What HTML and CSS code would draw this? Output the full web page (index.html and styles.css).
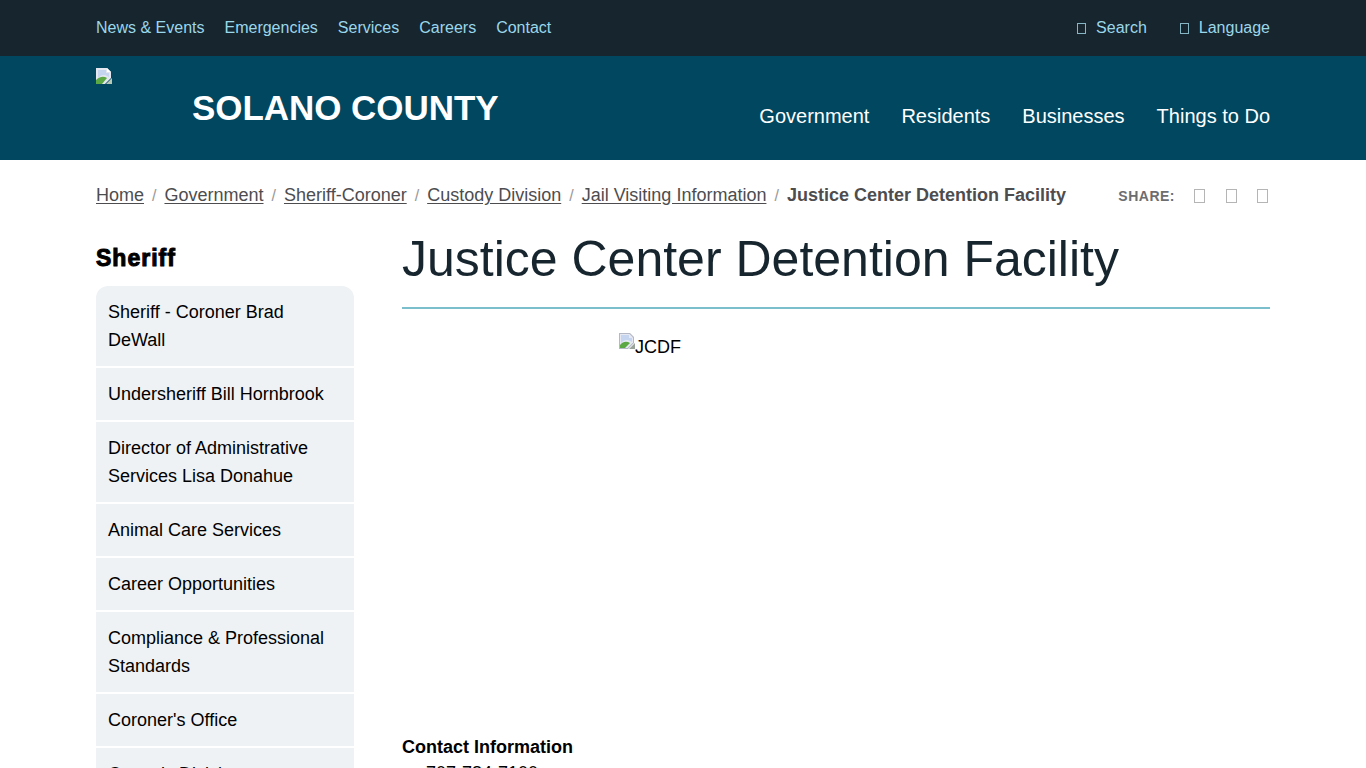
FILE: index.html
```html
<!DOCTYPE html>
<html lang="en">

<head>
  <meta charset="UTF-8">
  <meta name="viewport" content="width=device-width, initial-scale=1.0">
  <title>Justice Center Detention Facility</title>
  <link rel="stylesheet" href="styles.css">
</head>

<body>
  <div class="top-bar">
    <div class="wrap top-bar-inner">
      <nav class="top-links">
        <a href="#">News &amp; Events</a>
        <a href="#">Emergencies</a>
        <a href="#">Services</a>
        <a href="#">Careers</a>
        <a href="#">Contact</a>
      </nav>
      <div class="top-tools">
        <a href="#"><span class="tofu"></span>Search</a>
        <a href="#"><span class="tofu"></span>Language</a>
      </div>
    </div>
  </div>

  <header class="site-header">
    <div class="wrap site-header-inner">
      <div class="brand">
        <svg class="broken-img" width="16" height="16" viewBox="0 0 16 16">
          <path d="M0 0H11L15 4V10L9 16H0Z" fill="#e4e7f0" />
          <path d="M11 0L15 4H11Z" fill="#fff" />
          <path d="M2 2H10V5H13V9L11 8C8 6 5 7 2 10Z" fill="#c5d5f0" />
          <path d="M0 16V12C4 8 8 8 11 10L6 16Z" fill="#5ca845" />
          <path d="M16 10V16H10Z" fill="#b9c8b4" />
        </svg>
        <span class="brand-name">SOLANO COUNTY</span>
      </div>
      <nav class="main-nav">
        <a href="#">Government</a>
        <a href="#">Residents</a>
        <a href="#">Businesses</a>
        <a href="#">Things to Do</a>
      </nav>
    </div>
  </header>

  <div class="wrap crumb-row">
    <ol class="crumbs">
      <li><a href="#">Home</a></li>
      <li><a href="#">Government</a></li>
      <li><a href="#">Sheriff-Coroner</a></li>
      <li><a href="#">Custody Division</a></li>
      <li><a href="#">Jail Visiting Information</a></li>
      <li class="current"><span>Justice Center Detention Facility</span></li>
    </ol>
    <div class="share">
      <span class="share-label">SHARE:</span>
      <span class="tofu tofu-share"></span>
      <span class="tofu tofu-share"></span>
      <span class="tofu tofu-share"></span>
    </div>
  </div>

  <div class="wrap page-body">
    <aside class="side">
      <h2 class="side-title">Sheriff</h2>
      <ul class="side-nav">
        <li><a href="#">Sheriff - Coroner Brad DeWall</a></li>
        <li><a href="#">Undersheriff Bill Hornbrook</a></li>
        <li><a href="#">Director of Administrative Services Lisa Donahue</a></li>
        <li><a href="#">Animal Care Services</a></li>
        <li><a href="#">Career Opportunities</a></li>
        <li><a href="#">Compliance &amp; Professional Standards</a></li>
        <li><a href="#">Coroner's Office</a></li>
        <li><a href="#">Custody Division</a></li>
      </ul>
    </aside>

    <main class="content">
      <h1>Justice Center Detention Facility</h1>
      <div class="photo">
        <svg class="broken-img" width="16" height="16" viewBox="0 0 16 16">
          <path d="M0 0H11L15 4V10L9 16H0Z" fill="#b4b8c4" />
          <path d="M1 1H10.5L14 4.5V9.5L8.5 15H1Z" fill="#e6e9f2" />
          <path d="M2 2H10V5H13V9L11 8C8 6 5 7 2 10Z" fill="#c5d5f0" />
          <path d="M1 15V12C4 8 8 8 11 10L6 15Z" fill="#5ca845" />
          <path d="M16 10V16H10Z" fill="#9aa39a" />
        </svg><span class="photo-alt">JCDF</span>
      </div>
      <h3 class="contact-title">Contact Information</h3>
      <ul class="contact-list">
        <li>707-784-7100</li>
      </ul>
    </main>
  </div>
</body>

</html>
```

FILE: styles.css
```css
html,
body {
  height: 100%;
}

body {
  margin: 0;
  font-family: "Liberation Sans", Arial, sans-serif;
  font-size: 18px;
  line-height: 28px;
  color: #000;
  background-color: #fff;
  overflow-x: hidden;
}

a {
  color: inherit;
  text-decoration: none;
}

.wrap {
  width: 1174px;
  margin: 0 auto;
}

/* icon font did not load in the original, so the glyphs are empty boxes */
.tofu {
  display: inline-block;
  box-sizing: border-box;
  width: 9px;
  height: 11px;
  border: 1px solid #86b5c4;
}

/* top bar */
.top-bar {
  background-color: #17252e;
  color: #9ad7ea;
  font-size: 16px;
}

.top-bar-inner {
  display: flex;
  justify-content: space-between;
  align-items: center;
  height: 56px;
}

.top-links {
  display: flex;
  gap: 20px;
}

.top-tools {
  display: flex;
  gap: 33px;
}

.top-tools a {
  display: flex;
  align-items: center;
  gap: 10px;
}

/* header */
.site-header {
  background-color: #00475f;
  color: #fff;
}

.site-header-inner {
  display: flex;
  justify-content: space-between;
  height: 104px;
}

.brand {
  display: flex;
  align-items: flex-start;
  padding-top: 12px;
}

.broken-img {
  display: block;
  flex: none;
}

.brand-name {
  margin: 8px 0 0 80px;
  font-size: 35px;
  line-height: 64px;
  font-weight: 700;
  letter-spacing: -0.05px;
}

.main-nav {
  display: flex;
  gap: 32px;
  padding-top: 46px;
  font-size: 20px;
}

/* breadcrumb */
.crumb-row {
  display: flex;
  justify-content: space-between;
  align-items: center;
  height: 70px;
  color: #4d4d4f;
}

.crumbs {
  display: flex;
  margin: 0;
  padding: 0;
  list-style: none;
}

.crumbs a {
  text-decoration: underline;
  text-underline-offset: 2px;
}

.crumbs li + li::before {
  content: "/";
  padding: 0 8px;
  color: #999;
  font-size: 16px;
  font-weight: 400;
}

.crumbs .current span {
  font-weight: 700;
}

.share {
  display: flex;
  align-items: center;
  gap: 20.5px;
  margin: 2px 2px 0 0;
}

.share-label {
  margin-right: -1.5px;
  font-size: 14px;
  font-weight: 700;
  letter-spacing: 0.5px;
  color: #6d6d6f;
}

.tofu-share {
  width: 11px;
  height: 14px;
  border-color: #b5b5b5;
}

/* body columns */
.page-body {
  display: flex;
  gap: 48px;
}

.side {
  flex: none;
  width: 258px;
}

.side-title {
  margin: 14px 0 14px;
  font-size: 23px;
  line-height: 28px;
  font-weight: 700;
  -webkit-text-stroke: 1px #000;
  letter-spacing: 1px;
}

.side-nav {
  margin: 0;
  padding: 0;
  list-style: none;
  border-radius: 12px 12px 0 0;
  overflow: hidden;
}

.side-nav li {
  margin-bottom: 2px;
  background-color: #eff2f5;
}

.side-nav a {
  display: block;
  padding: 12px 12px;
}

.content {
  flex: 1;
  min-width: 0;
}

.content h1 {
  margin: 0;
  padding: 0 0 19px;
  border-bottom: 2px solid #7bbfcd;
  font-size: 50px;
  line-height: 58px;
  font-weight: 400;
  color: #17252e;
}

.photo {
  display: flex;
  align-items: flex-start;
  height: 403px;
  padding: 24px 0 0 217px;
}

.photo-alt {
  line-height: 28px;
}

.contact-title {
  margin: 0 0 1px;
  font-size: 18px;
  line-height: 22px;
  font-weight: 700;
}

.contact-list {
  margin: 0;
  padding-left: 24px;
}
```
